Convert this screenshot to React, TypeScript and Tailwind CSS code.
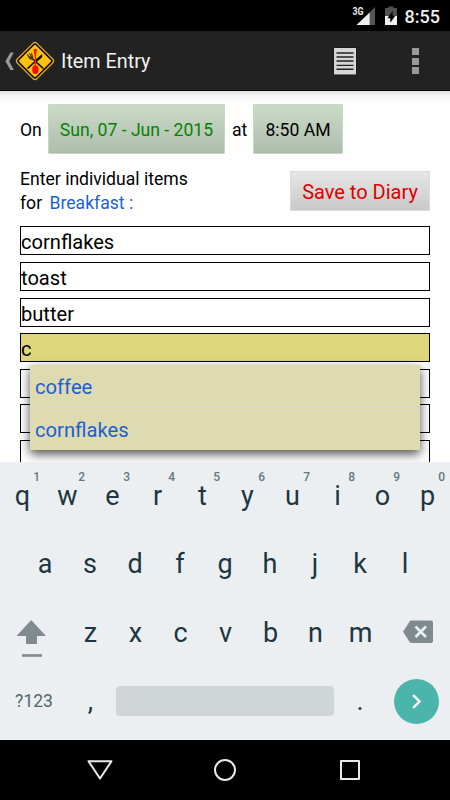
const ITEMS = ["cornflakes", "toast", "butter", "c", "", "", ""];
const ACTIVE_ROW = 3;
const SUGGESTIONS = ["coffee", "cornflakes"];

const TOP_KEYS = ["q", "w", "e", "r", "t", "y", "u", "i", "o", "p"];
const HOME_KEYS = ["a", "s", "d", "f", "g", "h", "j", "k", "l"];
const BOTTOM_KEYS = ["z", "x", "c", "v", "b", "n", "m"];

// ── Icons ──────────────────────────────────────────────────────────────────

function DinerSign() {
  return (
    <svg width="40" height="40" viewBox="0 0 40 40">
      <rect x="5.5" y="5.5" width="29" height="29" rx="3.4" transform="rotate(45 20 20)" fill="#e9ab10" />
      <rect x="7.5" y="7.5" width="25" height="25" rx="2" transform="rotate(45 20 20)" fill="#ffc20e" stroke="#15120a" strokeWidth="1.7" />
      {/* fork */}
      <path d="M17 17.5 28 27.2" stroke="#15120a" strokeWidth="1.6" strokeLinecap="round" />
      <path d="M12.2 13.4 16 18 M14.2 12.2 17.4 17 M16.4 12 17.8 16.6" stroke="#4d3900" strokeWidth="1.1" />
      <path d="M12.6 15.6 15 18.6 18.4 18.8 18 15.4Z" fill="#4d3900" />
      {/* knife */}
      <path d="M13 27.2 19 21.5" stroke="#15120a" strokeWidth="1.6" strokeLinecap="round" />
      <path d="M18 22.5 20 19 26.8 13.2 Q28.4 15 25.8 17.6 L21 21.4Z" fill="#15120a" />
      {/* spoon */}
      <path d="M18.6 8.4Q20.3 7 22 8.4L21 15.5V25h-1.4v-9.5Z" fill="#fb1a0c" />
      <ellipse cx="20.4" cy="28.6" rx="3.2" ry="4.4" fill="#ff0a05" />
    </svg>
  );
}

function NotesIcon() {
  return (
    <svg className="mt-px" width="24" height="29" viewBox="0 0 24 29">
      <rect x="0.5" y="0.5" width="23" height="28" fill="#111" />
      <rect x="1" y="1" width="22" height="26.5" fill="#d6d6d6" />
      <path d="M3.5 6h17M3.5 10h17M3.5 14h17M3.5 18.4h17M3.5 22.2h17" stroke="#222" strokeWidth="1.4" />
    </svg>
  );
}

// ── Bars ───────────────────────────────────────────────────────────────────

function StatusBar() {
  return (
    <div className="flex h-[31px] items-center justify-end bg-black pt-px pr-[10px] text-[#f0f0f0]">
      <svg width="24" height="20" viewBox="0 0 24 20">
        <text x="0.5" y="9" fontSize="11" fontWeight="700" fill="#eee" textLength="11" lengthAdjust="spacingAndGlyphs">3G</text>
        <path d="M23 1V19H17V7Z" fill="#555" />
        <path d="M17.6 6.5V19H4.5Z" fill="#eee" />
      </svg>
      <svg className="ml-[8px]" width="14" height="20" viewBox="0 0 14 20">
        <path d="M4.5 0.5h5V2H13V10H1V2h3.5Z" fill="#505050" />
        <path d="M1 10h12v9H1Z" fill="#eee" />
        <path d="M8.7 5 3.3 12.2h3V16.8l5-7H8.7Z" fill="#000" />
      </svg>
      <span className="ml-[7px] pt-px text-[18px] leading-none font-medium">8:55</span>
    </div>
  );
}

function ActionBar() {
  return (
    <header className="flex h-[60px] items-center border-b border-black bg-[#222] pl-[5px]">
      <svg width="10" height="20" viewBox="0 0 10 20">
        <path d="M5.4 1.4H8.8L4.2 10.2 8.8 19H5.4L0.4 10.2Z" fill="#999" />
      </svg>
      <DinerSign />
      <h1 className="mt-[2px] ml-[6px] flex-1 text-[19.8px] leading-none text-[#f1f1f1]">Item Entry</h1>
      <NotesIcon />
      <div className="mt-px mr-[31px] ml-[55px] flex flex-col gap-[2.5px]">
        <i className="block size-[7px] bg-[#999]" />
        <i className="block size-[7px] bg-[#999]" />
        <i className="block size-[7px] bg-[#999]" />
      </div>
    </header>
  );
}

function NavBar() {
  return (
    <nav className="flex h-[60px] items-center justify-center gap-[99px] bg-black">
      <svg width="26" height="24" viewBox="0 0 26 24" fill="none" stroke="#ece8e8" strokeWidth="2" strokeLinejoin="round">
        <path d="M1.5 3.2h23L13 20.5Z" />
      </svg>
      <svg width="26" height="24" viewBox="0 0 26 24" fill="none" stroke="#ece8e8" strokeWidth="2">
        <circle cx="13" cy="12" r="10" />
      </svg>
      <svg width="26" height="24" viewBox="0 0 26 24" fill="none" stroke="#ece8e8" strokeWidth="2" strokeLinejoin="round">
        <rect x="4" y="3" width="18" height="18" />
      </svg>
    </nav>
  );
}

// ── Form ───────────────────────────────────────────────────────────────────

function ItemRow({ text, active }: { text: string; active: boolean }) {
  return (
    <div
      className={`relative h-[29px] shrink-0 border border-black text-[20.1px] leading-[30px] ${
        active ? "bg-[#ddd67b]" : "bg-white"
      }`}
    >
      {text}
      {active && <Suggestions />}
    </div>
  );
}

function Suggestions() {
  return (
    <ul className="absolute top-[31px] right-[9px] left-[9px] z-10 bg-[#dedbb1] text-[20.2px] text-[#1c5fd4] shadow-[0_4px_10px_rgba(0,0,0,0.7)]">
      {SUGGESTIONS.map((s) => (
        <li key={s} className="h-[43px] border-b border-[#d6d6d6] pl-[5px] leading-[45px] last:h-[42px] last:border-0">
          {s}
        </li>
      ))}
    </ul>
  );
}

function EntryForm() {
  const stamp = "flex h-[50px] items-center justify-center rounded-[1px] border border-[#c2dac2] bg-linear-to-b from-[#cbdbc8] to-[#aebdac] pt-[3px]";
  return (
    <main className="h-[371px] overflow-hidden bg-white">
      <div className="h-[13px] bg-linear-to-b from-[#e3e3e3] via-[#f9f9f9] to-white" />
      <div className="px-5 text-[17.6px] text-black">
        <div className="flex items-center">
          <span className="w-[28px] pt-[3px]">On</span>
          <button className={`${stamp} w-[177px] text-[#078007]`}>Sun, 07 - Jun - 2015</button>
          <span className="w-[28px] pt-[3px] pl-[7px]">at</span>
          <button className={`${stamp} w-[90px]`}>8:50 AM</button>
        </div>
        <div className="mt-[13px] flex h-[48px] justify-between">
          <p className="leading-6">
            Enter individual items
            <br />
            for <span className="ml-[3px] text-[#1c5fd4]">Breakfast :</span>
          </p>
          <button className="mt-[4px] h-[40px] w-[140px] border border-[#ddd] bg-linear-to-b from-[#e6e6e6] to-[#c9c9c9] pt-px text-[20px] text-[#dc0000]">
            Save to Diary
          </button>
        </div>
        <div className="mt-[11.25px] flex flex-col gap-[6.64px]">
          {ITEMS.map((text, i) => (
            <ItemRow key={i} text={text} active={i === ACTIVE_ROW} />
          ))}
        </div>
      </div>
    </main>
  );
}

// ── Keyboard ───────────────────────────────────────────────────────────────

function Key({ label, hint }: { label: string; hint?: string }) {
  return (
    <div className="relative w-[45px] text-center">
      {label}
      {hint && (
        <sup className="absolute top-[9px] right-[5px] text-[12px] leading-none font-medium text-[#66777c]">{hint}</sup>
      )}
    </div>
  );
}

function Keyboard() {
  return (
    <section className="h-[278px] bg-[#ebeff2] text-[27px] leading-[68.5px] text-[#1d3640]">
      <div className="flex h-[68px]">
        {TOP_KEYS.map((k, i) => (
          <Key key={k} label={k} hint={String((i + 1) % 10)} />
        ))}
      </div>
      <div className="flex h-[69px] justify-center">
        {HOME_KEYS.map((k) => (
          <Key key={k} label={k} />
        ))}
      </div>
      <div className="flex h-[68px]">
        <div className="w-[68px] pt-[21px] pl-[16px]">
          <svg width="31" height="38" viewBox="0 0 31 38">
            <path d="M15.2 0 30 16H21v8H10V16H0.5Z" fill="#808b8f" />
            <path d="M6 35.5H26" stroke="#808b8f" strokeWidth="2.6" />
          </svg>
        </div>
        {BOTTOM_KEYS.map((k) => (
          <Key key={k} label={k} />
        ))}
        <div className="pt-[21px] pl-[19px]">
          <svg width="32" height="24" viewBox="0 0 32 24">
            <path d="M9.5 0.5H29Q31 0.5 31 2.5V21Q31 23 29 23H9.5Q8.3 23 7.6 22L1 11.8 7.6 1.5Q8.3 0.5 9.5 0.5Z" fill="#808b8f" />
            <path d="m13.5 6.5 10.5 10.5M24 6.5 13.5 17" stroke="#ebeff2" strokeWidth="2.6" />
          </svg>
        </div>
      </div>
      <div className="flex h-[73px] items-start">
        <span className="w-[68px] text-center text-[17.5px] text-[#52656c]">?123</span>
        <Key label="," />
        <div className="mt-[19px] ml-[3px] h-[30px] w-[218px] rounded-[4px] bg-[#d0d5d8]" />
        <span className="w-[52px] text-center">.</span>
        <div className="mt-[12px] ml-[8px] flex size-[45px] items-center justify-center rounded-full bg-[#4bb5ab]">
          <svg width="12" height="18" viewBox="0 0 12 18" fill="none" stroke="#fff" strokeWidth="2.4">
            <path d="m2.2 2.2 6.3 6.3-6.3 6.3" />
          </svg>
        </div>
      </div>
    </section>
  );
}

export default function App() {
  return (
    <div className="flex h-[800px] w-[450px] flex-col overflow-hidden bg-white font-['Roboto',sans-serif]">
      <StatusBar />
      <ActionBar />
      <EntryForm />
      <Keyboard />
      <NavBar />
    </div>
  );
}
